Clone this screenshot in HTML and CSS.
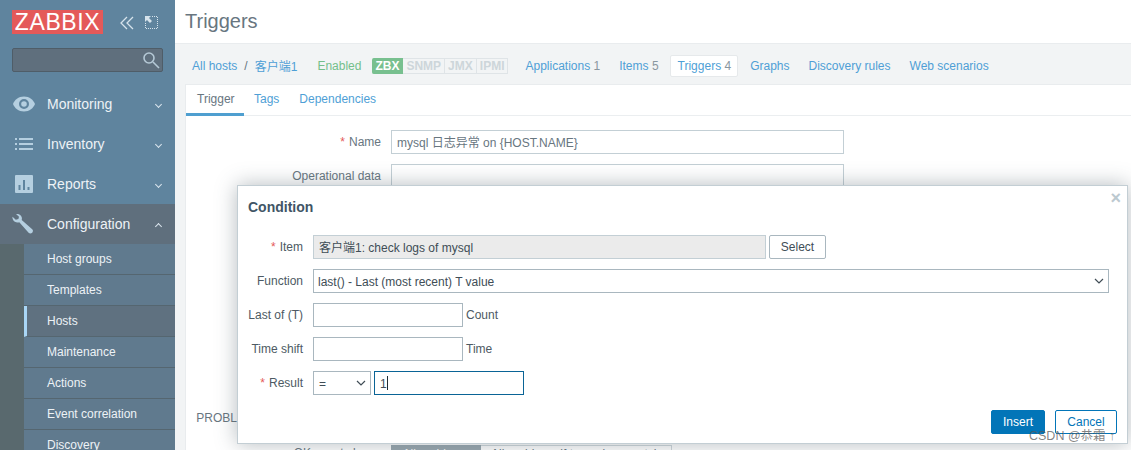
FILE: index.html
```html
<!DOCTYPE html>
<html lang="en">
<head>
    <meta charset="UTF-8">
    <meta name="viewport" content="width=device-width, initial-scale=1.0">
    <title>Triggers</title>
    <link rel="stylesheet" href="styles.css">
</head>
<body>
    <aside class="sidebar">
        <div class="brand">
            <div class="logo">ZABBIX</div>
            <svg class="brand-icon collapse" width="14" height="14" viewBox="0 0 14 14"><path d="M7 1 1 7l6 6M13 1 7 7l6 6" /></svg>
            <svg class="brand-icon expand" width="13" height="13" viewBox="0 0 13 13"><path class="dots" d="M7 .5h5.500V12.500H.5V6" /><path class="solid" d="M0 0h6L4 2l3 3-2 2-3-3-2 2z" /></svg>
        </div>
        <div class="search">
            <svg width="18" height="18" viewBox="0 0 18 18"><circle cx="7" cy="7" r="5" /><path d="m11 11 6 6" /></svg>
        </div>
        <nav class="menu">
            <a class="menu-item">
                <svg width="24" height="16" viewBox="0 0 24 16"><path fill-rule="evenodd" d="M12 .5C6.500.5 2.500 4 1 8c1.500 4 5.500 7.500 11 7.500S21.500 12 23 8C21.500 4 17.500.5 12 .500zm0 2.500a5 5 0 1 1 0 10 5 5 0 0 1 0-10zm0 2.200a2.800 2.800 0 1 0 0 5.600 2.800 2.800 0 0 0 0-5.600z" /></svg>
                <span>Monitoring</span><i class="caret down"></i>
            </a>
            <a class="menu-item">
                <svg width="24" height="16" viewBox="0 0 24 16"><path d="M3 2h2v2H3zM7 2h14v2H7zM3 7h2v2H3zM7 7h14v2H7zM3 12h2v2H3zM7 12h14v2H7z" /></svg>
                <span>Inventory</span><i class="caret down"></i>
            </a>
            <a class="menu-item">
                <svg width="24" height="18" viewBox="0 0 24 18"><path fill-rule="evenodd" d="M4 0h16a1 1 0 0 1 1 1v16a1 1 0 0 1-1 1H4a1 1 0 0 1-1-1V1a1 1 0 0 1 1-1zm2.500 10v5h2v-5zm4.500-5v10h2V5zm4.500 7v3h2v-3z" /></svg>
                <span>Reports</span><i class="caret down"></i>
            </a>
            <a class="menu-item open">
                <svg width="24" height="20" viewBox="0 0 24 20"><path d="M4 0c2.800-.5 5.200 1 5.800 3.400.2 1 .1 1.700-.1 2.500l10.500 9.300c1.100 1 .9 2.500 0 3.500-1 1-2.600 1.100-3.600 0L7.300 8.200c-2.500.8-5.200-.2-6.300-2.400-.5-1-.7-2-.5-3l3.300 3 2.600-.7.600-2.400z" /></svg>
                <span>Configuration</span><i class="caret up"></i>
            </a>
            <div class="submenu">
                <a>Host groups</a>
                <a>Templates</a>
                <a class="selected">Hosts</a>
                <a>Maintenance</a>
                <a>Actions</a>
                <a>Event correlation</a>
                <a>Discovery</a>
            </div>
        </nav>
    </aside>

    <main class="content">
        <header class="page-title"><h1>Triggers</h1></header>

        <div class="host-nav">
            <a class="link">All hosts</a>
            <span class="slash">/</span>
            <a class="link">客户端1</a>
            <span class="status">Enabled</span>
            <div class="tags">
                <span class="tag on">ZBX</span><span class="tag">SNMP</span><span class="tag">JMX</span><span class="tag">IPMI</span>
            </div>
            <a class="link apps">Applications <small>1</small></a>
            <a class="link items">Items <small>5</small></a>
            <a class="link current">Triggers <small>4</small></a>
            <a class="link graphs">Graphs</a>
            <a class="link rules">Discovery rules</a>
            <a class="link web">Web scenarios</a>
        </div>

        <section class="card">
            <div class="tabs">
                <a class="tab active">Trigger</a>
                <a class="tab">Tags</a>
                <a class="tab">Dependencies</a>
            </div>
            <form class="trigger-form">
                <label class="req">Name</label>
                <div class="field wide">mysql 日志异常 on {HOST.NAME}</div>
                <label>Operational data</label>
                <div class="field wide"></div>
                <label>Severity</label>
                <div class="field wide filler"></div>
                <label>PROBLEM event generation mode</label>
                <div class="field wide"></div>
                <label class="ok-label">OK event closes</label>
                <div class="segments">
                    <span class="segment on">All problems</span><span class="segment">All problems if tag values match</span>
                </div>
            </form>
        </section>
    </main>

    <div class="dialog">
        <span class="close">×</span>
        <h2>Condition</h2>
        <div class="dialog-form">
            <label class="req">Item</label>
            <div class="line">
                <div class="field item">客户端1: check logs of mysql</div>
                <button type="button" class="btn-select">Select</button>
            </div>
            <label>Function</label>
            <div class="line">
                <div class="field select full">last() - Last (most recent) T value<svg class="arrow" width="10" height="7" viewBox="0 0 10 7"><path d="m1 1 4 4 4-4" /></svg></div>
            </div>
            <label>Last of (T)</label>
            <div class="line">
                <div class="field short"></div><span>Count</span>
            </div>
            <label>Time shift</label>
            <div class="line">
                <div class="field short"></div><span>Time</span>
            </div>
            <label class="req">Result</label>
            <div class="line">
                <div class="field select op">=<svg class="arrow" width="10" height="7" viewBox="0 0 10 7"><path d="m1 1 4 4 4-4" /></svg></div>
                <div class="field short focus">1<i class="cursor"></i></div>
            </div>
        </div>
        <div class="dialog-buttons">
            <button type="button" class="btn-primary">Insert</button>
            <button type="button" class="btn-alt">Cancel</button>
        </div>
    </div>

    <div class="watermark">CSDN @恭霜 ↑</div>
</body>
</html>
```

FILE: styles.css
```css
* {
    box-sizing: border-box;
}
html, body {
    height: 450px;
    overflow: hidden;
}
body {
    margin: 0;
    display: flex;
    font-family: "Liberation Sans", "Noto Sans CJK SC", Arial, sans-serif;
    font-size: 12px;
    color: #5b6b75;
    background-color: #f2f4f5;
}

/* sidebar */
.sidebar {
    width: 175px;
    flex-shrink: 0;
    background-color: #5f849e;
    overflow: hidden;
}
.brand {
    display: flex;
    align-items: flex-start;
    padding: 10px 0 0 12px;
    height: 48px;
}
.logo {
    width: 91px;
    height: 24px;
    background-color: #e45959;
    color: #fff;
    font-size: 23px;
    line-height: 25px;
    text-align: center;
    letter-spacing: 0.6px;
}
.brand-icon.collapse {
    margin: 6px 0 0 17px;
    fill: none;
    stroke: #d6e3ec;
    stroke-width: 1.3;
}
.brand-icon.expand {
    margin: 6px 0 0 11px;
}
.expand .dots {
    fill: none;
    stroke: #d6e3ec;
    stroke-dasharray: 1 1;
}
.expand .solid {
    fill: #d6e3ec;
}
.search {
    margin-left: 12px;
    width: 151px;
    height: 24px;
    background-color: #5f6f7d;
    border: 1px solid #4f5d68;
    border-radius: 2px;
    display: flex;
    justify-content: flex-end;
    align-items: center;
    padding-right: 2px;
}
.search svg {
    fill: none;
    stroke: #b5c9d6;
    stroke-width: 1.6;
}
.menu {
    margin-top: 12px;
}
.menu-item {
    display: flex;
    align-items: center;
    height: 40px;
    padding-left: 12px;
    font-size: 14px;
    color: #edf2f6;
}
.menu-item svg {
    fill: #b5cfe0;
    width: 24px;
    flex-shrink: 0;
}
.menu-item span {
    margin-left: 11px;
    flex-grow: 1;
}
.menu-item.open {
    background-color: #5f6f7d;
}
.caret {
    width: 5px;
    height: 5px;
    margin-right: 14px;
    border-right: 1px solid #dbe6ee;
    border-bottom: 1px solid #dbe6ee;
    transform: rotate(45deg);
}
.caret.up {
    transform: rotate(225deg);
    margin-top: 4px;
}
.submenu {
    background-color: #59696e;
    padding-left: 24px;
}
.submenu a {
    display: block;
    height: 31px;
    line-height: 30px;
    padding-left: 23px;
    color: #edf2f6;
    background-color: #607a8e;
    border-bottom: 1px solid #556670;
}
.submenu a.selected {
    background-color: #5f7180;
    border-left: 3px solid #a9d6f5;
    padding-left: 20px;
}

/* main part */
.content {
    flex-grow: 1;
    min-width: 0;
}
.page-title {
    height: 44px;
    background-color: #fff;
    border-bottom: 1px solid #e9ecee;
    padding-left: 10px;
}
h1 {
    margin: 0;
    font-size: 20px;
    font-weight: normal;
    line-height: 43px;
    color: #68767f;
}
.host-nav {
    height: 40px;
    display: flex;
    align-items: center;
    padding-left: 17px;
    padding-top: 3px;
}
.link {
    color: #4f9fd6;
}
.link small {
    font-size: 12px;
    color: #8a979f;
}
.slash {
    margin: 0 7px 0 7px;
    color: #68767f;
}
.status {
    margin-left: 20px;
    color: #74bf8b;
}
.tags {
    display: flex;
    margin-left: 11px;
    height: 16px;
}
.tag {
    height: 16px;
    line-height: 14px;
    padding: 0 3px;
    color: #cdd6da;
    border: 1px solid #dfe4e7;
    border-left-width: 0;
    font-weight: bold;
}
.tag.on {
    color: #fff;
    background-color: #78c08f;
    border-color: #78c08f;
    border-radius: 2px 0 0 2px;
}
.link.apps {
    margin-left: 17px;
}
.link.items {
    margin-left: 19px;
}
.link.current {
    margin-left: 11px;
    background-color: #fff;
    border: 1px solid #e6e9eb;
    padding: 3px 6px 3px 7px;
    border-radius: 2px;
}
.link.graphs {
    margin-left: 12px;
}
.link.rules {
    margin-left: 19px;
}
.link.web {
    margin-left: 19px;
}
.card {
    margin-left: 10px;
    background-color: #fff;
    border-left: 1px solid #e9ecee;
    border-top: 1px solid #e9ecee;
    height: 400px;
    overflow: hidden;
}
.tabs {
    display: flex;
    height: 31px;
    border-bottom: 1px solid #ebeef0;
}
.tab {
    height: 31px;
    padding: 0 10px;
    line-height: 29px;
    color: #4f9fd6;
}
.tab.active {
    width: 58px;
    padding-left: 11px;
    color: #68767f;
    border-bottom: 3px solid #4f9fd0;
}
.trigger-form {
    display: grid;
    grid-template-columns: 195px 453px;
    column-gap: 10px;
    row-gap: 10px;
    padding-top: 14px;
}
.trigger-form label,
.dialog-form label {
    display: flex;
    justify-content: flex-end;
    line-height: 24px;
    white-space: nowrap;
}
.trigger-form label {
    color: #68767f;
}
.req::before {
    content: "*";
    margin-right: 4px;
    color: #e45959;
}
.field {
    height: 24px;
    line-height: 24px;
    padding: 0 5px;
    background-color: #fff;
    border: 1px solid #c3cfd5;
    white-space: nowrap;
    color: #68767f;
}
.filler {
    height: 198px;
}
.trigger-form .ok-label {
    margin-top: 5px;
    line-height: 16px;
}
.segments {
    display: flex;
    height: 24px;
    margin-top: 5px;
}
.segment {
    line-height: 16px;
    padding: 0 11px 0 10px;
    border: 1px solid #d0d8dc;
    border-left-width: 0;
    color: #68767f;
}
.segment.on {
    width: 90px;
    padding: 0;
    text-align: center;
    color: #fff;
    background-color: #9aa8b0;
    border-color: #9aa8b0;
}

/* dialog */
.dialog {
    position: absolute;
    left: 237px;
    top: 185px;
    width: 891px;
    height: 259px;
    background-color: #fff;
    border: 1px solid #c3ced4;
    box-shadow: 0 0 20px rgba(70, 85, 95, 0.4);
    padding: 0 10px;
}
.close {
    position: absolute;
    right: 6px;
    top: 2px;
    font-size: 18px;
    line-height: 20px;
    font-weight: bold;
    color: #bcc9d0;
}
h2 {
    margin: 0;
    padding-top: 14px;
    font-size: 14px;
    line-height: 14px;
    color: #3f5566;
}
.dialog-form {
    display: grid;
    grid-template-columns: 55px 1fr;
    column-gap: 10px;
    row-gap: 10px;
    margin-top: 21px;
    color: #4d5a63;
}
.line {
    display: flex;
    align-items: center;
    gap: 3px;
}
.dialog .field {
    border-color: #a9b7bf;
    color: #404d56;
}
.dialog .field.item {
    width: 453px;
    background-color: #ebebeb;
    border-color: #c3cfd5;
}
.field.select {
    position: relative;
}
.field.full {
    width: 796px;
    padding-left: 4px;
}
.field.short {
    width: 150px;
}
.field.op {
    width: 58px;
}
.arrow {
    position: absolute;
    right: 4px;
    top: 8px;
    fill: none;
    stroke: #404d56;
    stroke-width: 1.2;
}
.dialog .field.focus {
    border-color: #0a6496;
}
.cursor {
    display: inline-block;
    width: 1px;
    height: 14px;
    background-color: #1f2c33;
    vertical-align: -2px;
}
.btn-select {
    height: 24px;
    width: 57px;
    padding: 0;
    font: inherit;
    color: #404d56;
    background-color: #fff;
    border: 1px solid #a9b7bf;
    border-radius: 2px;
}
.dialog-buttons {
    display: flex;
    justify-content: flex-end;
    gap: 10px;
    margin-top: 15px;
}
.dialog-buttons button {
    height: 24px;
    padding: 0;
    font: inherit;
    border-radius: 2px;
}
.btn-primary {
    width: 54px;
    color: #fff;
    background-color: #0275b8;
    border: 1px solid #0275b8;
}
.btn-alt {
    width: 62px;
    color: #0275b8;
    background-color: #fff;
    border: 1px solid #0275b8;
}
.watermark {
    position: absolute;
    left: 1029px;
    top: 425px;
    font-size: 12.5px;
    color: rgba(90, 90, 90, 0.75);
    white-space: nowrap;
}
```
